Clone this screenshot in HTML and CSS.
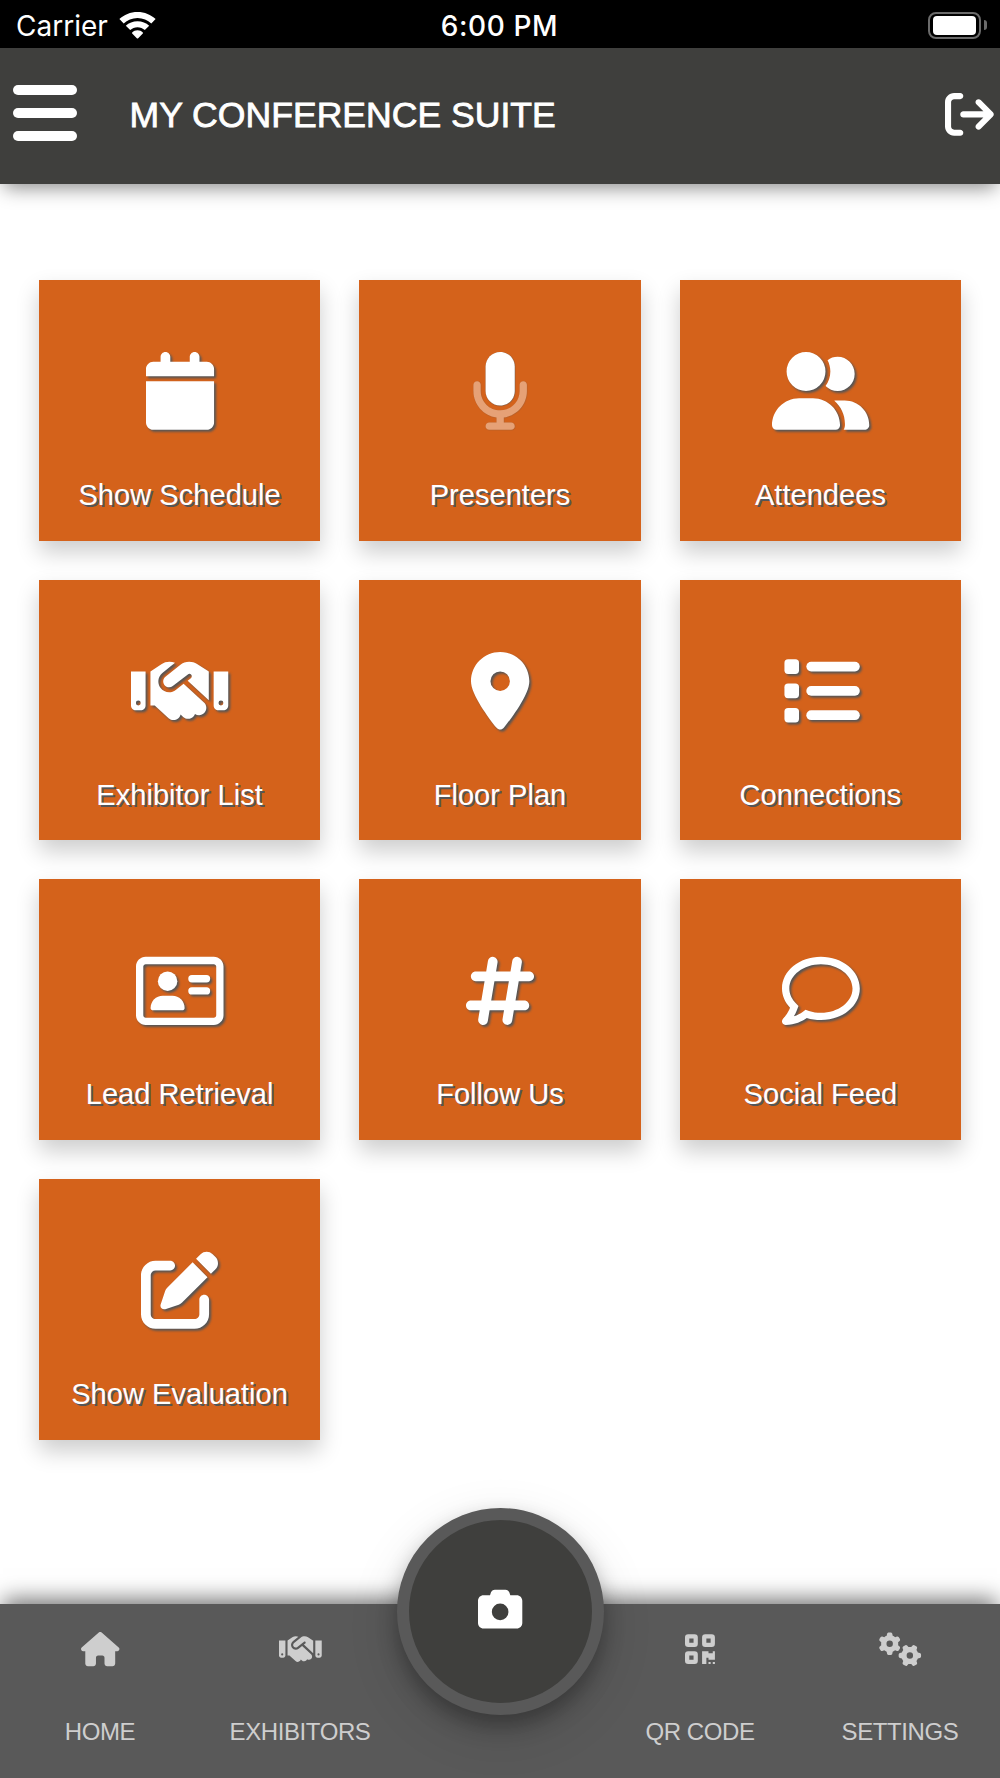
FILE: index.html
```html
<!DOCTYPE html>
<html lang="en">
<head>
    <meta charset="UTF-8">
    <meta name="viewport" content="width=device-width, initial-scale=1.0">
    <title>My Conference Suite</title>
    <link rel="stylesheet" href="styles.css">
</head>
<body>
    <div class="status-bar">
        <div class="carrier">
            <span>Carrier</span>
            <svg class="wifi" viewBox="0 0 37 27">
                <path d="M18.500 0C25.600 0 32 2.700 36.600 7.100L32.300 11.400C28.700 8 23.900 5.900 18.500 5.900S8.300 8 4.700 11.400L.4 7.100C5 2.700 11.400 0 18.500 0z"/>
                <path d="M18.500 9.300C23 9.300 27.100 11 30.200 13.800L25.800 18.100C23.900 16.400 21.300 15.300 18.500 15.300S13.100 16.400 11.200 18.100L6.800 13.800C9.900 11 14 9.300 18.500 9.300z"/>
                <path d="M18.500 18.300C20.600 18.300 22.400 19.100 23.800 20.400C24.100 20.700 24.100 21.200 23.800 21.500L19.200 26.200C18.800 26.600 18.200 26.600 17.800 26.200L13.200 21.500C12.900 21.200 12.900 20.700 13.200 20.400C14.600 19.100 16.400 18.300 18.500 18.300z"/>
            </svg>
        </div>
        <div class="time">6:00 PM</div>
        <div class="battery">
            <div class="battery-body"><div class="battery-fill"></div></div>
            <div class="battery-tip"></div>
        </div>
    </div>

    <header class="header">
        <div class="menu-btn">
            <span></span>
            <span></span>
            <span></span>
        </div>
        <h1>MY CONFERENCE SUITE</h1>
        <svg class="logout" viewBox="0 0 512 512"><path d="M502.600 278.600c12.500-12.500 12.500-32.800 0-45.300l-128-128c-12.500-12.500-32.800-12.500-45.300 0s-12.500 32.800 0 45.300L402.700 224 192 224c-17.700 0-32 14.300-32 32s14.300 32 32 32l210.700 0-73.400 73.400c-12.500 12.500-12.500 32.800 0 45.300s32.800 12.500 45.300 0l128-128zM160 96c17.700 0 32-14.300 32-32s-14.300-32-32-32L96 32C43 32 0 75 0 128L0 384c0 53 43 96 96 96l64 0c17.700 0 32-14.300 32-32s-14.300-32-32-32l-64 0c-17.700 0-32-14.300-32-32l0-256c0-17.700 14.300-32 32-32l64 0z"/></svg>
    </header>

    <main class="grid">
        <div class="card">
            <svg viewBox="0 0 448 512"><path d="M96 32V64H48C21.500 64 0 85.500 0 112v48H448V112c0-26.500-21.500-48-48-48H352V32c0-17.700-14.300-32-32-32s-32 14.300-32 32V64H160V32c0-17.700-14.300-32-32-32S96 14.300 96 32zM448 192H0V464c0 26.500 21.500 48 48 48H400c26.500 0 48-21.500 48-48V192z"/></svg>
            <p>Show Schedule</p>
        </div>
        <div class="card">
            <svg class="duotone" viewBox="0 0 384 512">
                <path class="faded" d="M40 192c13.300 0 24 10.700 24 24v40c0 70.700 57.300 128 128 128s128-57.300 128-128V216c0-13.300 10.700-24 24-24s24 10.700 24 24v40c0 89.100-66.200 162.700-152 174.400V464h48c13.300 0 24 10.700 24 24s-10.700 24-24 24H120c-13.300 0-24-10.700-24-24s10.700-24 24-24h48V430.400C82.200 418.700 16 345.100 16 256V216c0-13.300 10.700-24 24-24z"/>
                <path class="solid" d="M96 96V256c0 53 43 96 96 96s96-43 96-96V96c0-53-43-96-96-96S96 43 96 96z"/>
            </svg>
            <p>Presenters</p>
        </div>
        <div class="card">
            <svg viewBox="0 0 640 512"><path d="M96 128a128 128 0 1 1 256 0A128 128 0 1 1 96 128zM0 482.300C0 383.800 79.800 304 178.300 304h91.400C368.200 304 448 383.800 448 482.300c0 16.400-13.300 29.700-29.700 29.700H29.700C13.300 512 0 498.700 0 482.300zM609.300 512H471.400c5.400-9.400 8.600-20.300 8.600-32v-8c0-60.700-27.100-115.200-69.800-151.800c2.400-.1 4.700-.2 7.100-.2h61.400C567.800 320 640 392.200 640 481.300c0 17-13.800 30.700-30.700 30.700zM432 256c-31 0-59-12.600-79.300-32.900C372.400 196.500 384 163.600 384 128c0-26.800-6.600-52.100-18.300-74.300C384.300 40.100 407.200 32 432 32c61.900 0 112 50.100 112 112s-50.100 112-112 112z"/></svg>
            <p>Attendees</p>
        </div>
        <div class="card">
            <svg viewBox="0 0 640 512"><path id="handshake" d="M323.400 85.200l-96.800 78.400c-16.100 13-19.200 36.400-7 53.100c12.900 17.800 38 21.300 55.300 7.800l99.300-77.200c7-5.400 17-4.200 22.500 2.800s4.200 17-2.800 22.500l-20.900 16.200L512 316.800V128h-.7l-3.900-2.500L434.800 79c-15.300-9.800-33.200-15-51.400-15c-21.800 0-43 7.500-60 21.200zm22.800 124.400l-51.700 40.200C263 274.300 217.300 268 193.700 235.600c-22.200-30.500-16.600-73.100 12.700-96.800l83.200-67.300c-11.600-4.900-24.100-7.400-36.800-7.400C234 64 215.700 69.600 200 80l-72 48V352h28.200l91.400 83.400c19.600 17.900 49.900 16.500 67.800-3.100c5.500-6.100 9.200-13.200 11.100-20.600l17 15.600c19.500 17.900 49.900 16.600 67.800-2.900c4.500-4.900 7.800-10.600 9.900-16.500c19.400 13 45.800 10.300 62.100-7.500c17.900-19.500 16.600-49.900-2.900-67.800L346.200 209.600zM0 128V352c0 17.700 14.300 32 32 32H64c17.700 0 32-14.300 32-32V128H0zM48 320a16 16 0 1 1 0 32 16 16 0 1 1 0-32zM544 128V352c0 17.700 14.300 32 32 32h32c17.700 0 32-14.300 32-32V128H544zm32 208a16 16 0 1 1 32 0 16 16 0 1 1-32 0z"/></svg>
            <p>Exhibitor List</p>
        </div>
        <div class="card">
            <svg viewBox="0 0 384 512"><path d="M215.700 499.200C267 435 384 279.400 384 192C384 86 298 0 192 0S0 86 0 192c0 87.400 117 243 168.300 307.200c12.300 15.300 35.100 15.300 47.400 0zM192 128a64 64 0 1 1 0 128 64 64 0 1 1 0-128z"/></svg>
            <p>Floor Plan</p>
        </div>
        <div class="card">
            <svg viewBox="0 0 512 512">
                <rect x="16" y="48" width="96" height="96" rx="24"/>
                <rect x="16" y="208" width="96" height="96" rx="24"/>
                <rect x="16" y="368" width="96" height="96" rx="24"/>
                <rect x="160" y="64" width="352" height="64" rx="32"/>
                <rect x="160" y="224" width="352" height="64" rx="32"/>
                <rect x="160" y="384" width="352" height="64" rx="32"/>
            </svg>
            <p>Connections</p>
        </div>
        <div class="card">
            <svg viewBox="0 0 576 512">
                <path d="M512 80c8.800 0 16 7.200 16 16V416c0 8.800-7.200 16-16 16H64c-8.800 0-16-7.200-16-16V96c0-8.800 7.200-16 16-16H512zM64 32C28.700 32 0 60.700 0 96V416c0 35.300 28.700 64 64 64H512c35.300 0 64-28.700 64-64V96c0-35.300-28.700-64-64-64H64z"/>
                <circle cx="208" cy="192" r="64"/>
                <path d="M176 288c-44.200 0-80 35.800-80 80c0 8.800 7.200 16 16 16H304c8.800 0 16-7.200 16-16c0-44.200-35.800-80-80-80H176z"/>
                <rect x="344" y="152" width="144" height="48" rx="24"/>
                <rect x="344" y="232" width="144" height="48" rx="24"/>
            </svg>
            <p>Lead Retrieval</p>
        </div>
        <div class="card">
            <svg viewBox="0 0 448 512"><path d="M181.300 32.400c17.400 2.900 29.200 19.400 26.300 36.800L197.800 128h95.100l11.500-69.300c2.900-17.400 19.400-29.200 36.800-26.300s29.200 19.400 26.300 36.800L357.800 128H416c17.700 0 32 14.300 32 32s-14.300 32-32 32H347.100L325.800 320H384c17.700 0 32 14.300 32 32s-14.300 32-32 32H315.100l-11.500 69.300c-2.900 17.400-19.400 29.200-36.800 26.300s-29.200-19.400-26.300-36.800l9.800-58.700H155.100l-11.500 69.300c-2.900 17.400-19.400 29.200-36.800 26.300s-29.200-19.400-26.300-36.800L90.200 384H32c-17.700 0-32-14.300-32-32s14.300-32 32-32h68.900l21.300-128H64c-17.700 0-32-14.300-32-32s14.300-32 32-32h68.900l11.500-69.300c2.900-17.400 19.400-29.200 36.800-26.300zM187.100 192L165.800 320h95.100l21.300-128H187.100z"/></svg>
            <p>Follow Us</p>
        </div>
        <div class="card">
            <svg viewBox="0 0 512 512"><path d="M256 32C114.600 32 0 125.100 0 240c0 47.630 19.910 91.250 52.910 126.200c-14.880 39.500-45.870 72.880-46.370 73.250c-6.625 7-8.375 17.250-4.625 26C5.818 474.200 14.380 480 24 480c61.500 0 109.100-25.750 139.100-46.250C191.100 442.800 223.200 448 256 448c141.400 0 256-93.130 256-208S397.400 32 256 32zM256.100 400c-26.750 0-53.120-4.125-78.380-12.120l-22.750-7.125l-19.500 13.750c-14.250 10.120-33.880 21.380-57.500 29c7.375-12.120 14.370-25.750 19.880-40.250l10.620-28l-20.620-21.870C69.820 314.100 48.070 282.200 48.070 240c0-88.250 93.250-160 208-160s208 71.750 208 160S370.800 400 256.100 400z"/></svg>
            <p>Social Feed</p>
        </div>
        <div class="card">
            <svg viewBox="0 0 512 512"><path d="M471.600 21.700c-21.900-21.900-57.300-21.900-79.200 0L362.300 51.700l97.900 97.900 30.100-30.100c21.900-21.900 21.900-57.300 0-79.200L471.600 21.700zm-299.200 220c-6.100 6.100-10.800 13.600-13.500 21.900l-29.600 88.800c-2.900 8.600-.6 18.100 5.800 24.600s15.900 8.700 24.600 5.800l88.800-29.600c8.200-2.700 15.700-7.400 21.900-13.500L437.700 172.300 339.700 74.300 172.400 241.700zM96 64C43 64 0 107 0 160V416c0 53 43 96 96 96H352c53 0 96-43 96-96V320c0-17.700-14.300-32-32-32s-32 14.300-32 32v96c0 17.700-14.300 32-32 32H96c-17.700 0-32-14.300-32-32V160c0-17.700 14.300-32 32-32h96c17.700 0 32-14.300 32-32s-14.300-32-32-32H96z"/></svg>
            <p>Show Evaluation</p>
        </div>
    </main>

    <nav class="bottom-nav">
        <div class="nav-item">
            <svg viewBox="0 0 576 512"><path d="M575.800 255.500c0 18-15 32.100-32 32.100h-32l.7 160.200c0 2.700-.2 5.400-.5 8.100V472c0 22.100-17.900 40-40 40H456c-1.100 0-2.200 0-3.300-.1c-1.400 .1-2.800 .1-4.200 .1H416 392c-22.100 0-40-17.900-40-40V448 384c0-17.700-14.300-32-32-32H256c-17.700 0-32 14.300-32 32v64 24c0 22.100-17.900 40-40 40H160 128.100c-1.500 0-3-.1-4.500-.2c-1.200 .1-2.400 .2-3.600 .2H104c-22.100 0-40-17.900-40-40V360c0-.9 0-1.900 .1-2.800V287.600H32c-18 0-32-14-32-32.100c0-9 3-17 10-24L266.400 8c7-7 15-8 22-8s15 2 21 7L564.800 231.500c8 7 12 15 11 24z"/></svg>
            <span>HOME</span>
        </div>
        <div class="nav-item">
            <svg viewBox="0 0 640 512"><use href="#handshake"/></svg>
            <span>EXHIBITORS</span>
        </div>
        <div class="nav-center">
            <div class="camera-btn">
                <svg viewBox="0 0 512 512"><path d="M149.100 64.800L138.700 96H64C28.700 96 0 124.700 0 160V416c0 35.300 28.700 64 64 64H448c35.300 0 64-28.700 64-64V160c0-35.300-28.700-64-64-64H373.300L362.900 64.800C356.400 45.200 338.100 32 317.400 32H194.600c-20.700 0-39 13.200-45.500 32.800zM256 192a96 96 0 1 1 0 192 96 96 0 1 1 0-192z"/></svg>
            </div>
        </div>
        <div class="nav-item">
            <svg viewBox="0 0 448 512"><path fill-rule="evenodd" d="M48 32h96a48 48 0 0 1 48 48v96a48 48 0 0 1-48 48H48a48 48 0 0 1-48-48V80a48 48 0 0 1 48-48zM64 96v64h64V96zM304 32h96a48 48 0 0 1 48 48v96a48 48 0 0 1-48 48h-96a48 48 0 0 1-48-48V80a48 48 0 0 1 48-48zM320 96v64h64V96zM48 288h96a48 48 0 0 1 48 48v96a48 48 0 0 1-48 48H48a48 48 0 0 1-48-48v-96a48 48 0 0 1 48-48zM64 352v64h64v-64zM256 288h96v32h64v-32h32v128h-96v-32h-32v96h-64zM352 448h32v32h-32zM416 448h32v32h-32z"/></svg>
            <span>QR CODE</span>
        </div>
        <div class="nav-item">
            <svg viewBox="0 0 640 512">
                <path id="gear" d="M308.500 135.300c7.100-6.300 9.900-16.200 6.200-25c-2.300-5.300-4.800-10.500-7.600-15.500L304 89.400c-3-5-6.300-9.900-9.800-14.600c-5.700-7.600-15.700-10.100-24.700-7.100l-28.200 9.300c-10.700-8.800-23-16-36.200-20.900L199 27.100c-1.900-9.300-9.100-16.700-18.500-17.800C173.900 8.400 167.200 8 160.400 8h-.7c-6.800 0-13.500 .4-20.100 1.200c-9.400 1.100-16.600 8.600-18.500 17.800L115 56.100c-13.300 5-25.500 12.100-36.200 20.900L50.500 67.800c-9-3-19-.5-24.700 7.100c-3.500 4.700-6.800 9.600-9.900 14.600l-3 5.300c-2.800 5-5.300 10.200-7.600 15.600c-3.700 8.700-.9 18.600 6.200 25l22.200 19.800C32.600 161.900 32 168.900 32 176s.6 14.100 1.700 20.900L11.500 216.700c-7.100 6.300-9.900 16.200-6.200 25c2.300 5.300 4.800 10.500 7.600 15.600l3 5.200c3 5.100 6.300 9.900 9.900 14.600c5.700 7.600 15.700 10.100 24.700 7.100l28.200-9.300c10.700 8.800 23 16 36.200 20.900l6.100 29.100c1.900 9.300 9.100 16.700 18.500 17.800c6.700 .8 13.500 1.200 20.400 1.200s13.700-.4 20.400-1.200c9.400-1.100 16.600-8.600 18.500-17.800l6.100-29.100c13.300-5 25.500-12.100 36.200-20.900l28.200 9.300c9 3 19 .5 24.700-7.100c3.500-4.700 6.800-9.500 9.800-14.600l3.100-5.400c2.800-5 5.300-10.200 7.600-15.500c3.700-8.700 .9-18.600-6.200-25l-22.200-19.800c1.100-6.800 1.700-13.800 1.700-20.900s-.6-14.100-1.700-20.900l22.200-19.800zM112 176a48 48 0 1 1 96 0 48 48 0 1 1-96 0z"/>
                <use href="#gear" transform="translate(302 176) rotate(90 160 176)"/>
            </svg>
            <span>SETTINGS</span>
        </div>
    </nav>
</body>
</html>
```
FILE: styles.css
```css
* {
    box-sizing: border-box;
}
body {
    margin: 0;
    height: 100vh;
    display: flex;
    flex-direction: column;
    overflow: hidden;
    background-color: #fff;
    color: #fff;
    font-family: "Liberation Sans", Arial, sans-serif;
}
svg {
    display: block;
    fill: currentColor;
    overflow: visible;
}

/* status bar */
.status-bar {
    height: 48px;
    flex-shrink: 0;
    display: grid;
    grid-template-columns: 1fr auto 1fr;
    align-items: center;
    padding: 0 13px 0 16px;
    background-color: #000;
    font-family: Inter, sans-serif;
    font-size: 28px;
}
.carrier {
    display: flex;
    align-items: center;
    gap: 11px;
    line-height: 48px;
}
.carrier span {
    padding-top: 2px;
}
.wifi {
    width: 37px;
    height: 27px;
}
.time {
    padding: 2px 4px 0 0;
    font-weight: 500;
    letter-spacing: 0.6px;
}
.battery {
    display: flex;
    align-items: center;
    justify-content: flex-end;
    gap: 3px;
}
.battery-body {
    width: 53px;
    height: 27px;
    padding: 2px;
    border: 2px solid #6b6b6b;
    border-radius: 8px;
}
.battery-fill {
    height: 100%;
    margin: 0 1px;
    border-radius: 4px;
    background-color: #fff;
}
.battery-tip {
    width: 3px;
    height: 10px;
    border-radius: 0 3px 3px 0;
    background-color: #6b6b6b;
}

/* header */
.header {
    position: relative;
    height: 135.5px;
    flex-shrink: 0;
    display: flex;
    align-items: center;
    padding: 0 6px 0 13px;
    background-color: #3f3f3d;
    box-shadow: 0 8px 18px -4px rgba(0, 0, 0, 0.45);
}
.header h1 {
    flex: 1;
    margin: 0 0 0 52.5px;
    font-size: 35.6px;
    font-weight: normal;
    -webkit-text-stroke: 0.8px #fff;
}
.menu-btn {
    width: 64px;
    display: flex;
    flex-direction: column;
    gap: 13px;
    margin-bottom: 6px;
}
.menu-btn span {
    height: 10px;
    border-radius: 5px;
    background-color: #fff;
}
.logout {
    width: 48.8px;
    height: 48.8px;
    margin-bottom: 2px;
}

/* tiles */
.grid {
    flex: 1;
    display: grid;
    grid-template-columns: repeat(3, 1fr);
    grid-auto-rows: 260.7px;
    gap: 38.9px 38.7px;
    padding: 96.6px 38.7px 0;
}
.card {
    display: flex;
    flex-direction: column;
    align-items: center;
    padding-top: 72.3px;
    background-color: #d4621b;
    box-shadow: 0 10.7px 21.3px rgba(0, 0, 0, 0.2);
}
.card svg {
    height: 77.8px;
    filter: drop-shadow(2.4px 2.4px 1.2px #555);
}
.card .duotone {
    filter: none;
}
.duotone .solid {
    filter: drop-shadow(2.4px 2.4px 1.2px #555);
}
.duotone .faded {
    fill: #e6a176;
    filter: drop-shadow(2.4px 2.4px 1.2px rgba(85, 85, 85, 0.4));
}
.card p {
    margin: 47px 0 0;
    font-size: 29.1px;
    line-height: 36px;
    text-shadow: 2px 2px 0.5px #555;
}

/* bottom navigation */
.bottom-nav {
    position: relative;
    height: 174px;
    flex-shrink: 0;
    display: grid;
    grid-template-columns: repeat(5, minmax(0, 1fr));
    background-color: #595959;
    color: #cecece;
    box-shadow: 0 -8px 21px -3px rgba(0, 0, 0, 0.55);
}
.nav-item {
    display: flex;
    flex-direction: column;
    align-items: center;
    padding-top: 28.4px;
}
.nav-item svg {
    height: 34.2px;
}
.nav-item span {
    margin-top: 50px;
    font-size: 24px;
    line-height: 30px;
    letter-spacing: -0.4px;
    white-space: nowrap;
}
.nav-center {
    display: flex;
    justify-content: center;
}
.camera-btn {
    width: 207px;
    height: 207px;
    flex-shrink: 0;
    display: flex;
    align-items: center;
    justify-content: center;
    margin-top: -96.5px;
    border: 12px solid #595959;
    border-radius: 50%;
    background-color: #3f3f3d;
    color: #fff;
    box-shadow: 0 10.7px 21.3px rgba(0, 0, 0, 0.3), 0 16px 53px rgba(0, 0, 0, 0.12);
}
.camera-btn svg {
    width: 44.3px;
    height: 44.3px;
    margin-bottom: 3px;
}
```
